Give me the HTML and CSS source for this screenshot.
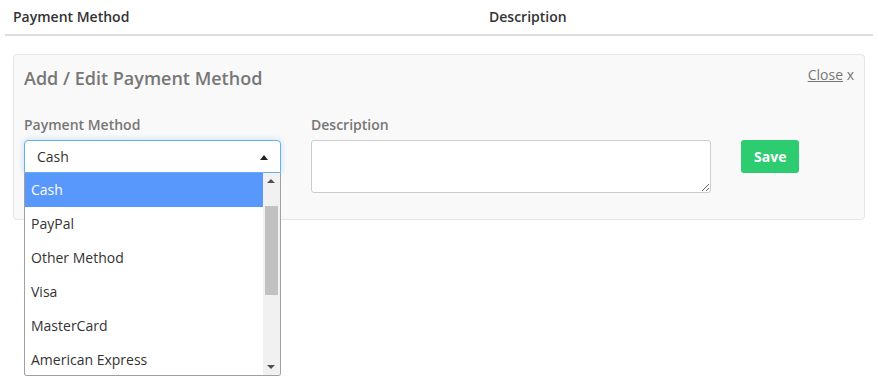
FILE: index.html
```html
<!DOCTYPE html>
<html lang="en">
<head>
  <meta charset="UTF-8">
  <title>Payment Methods</title>
  <link rel="stylesheet" href="styles.css">
</head>
<body>

  <div class="table-head">
    <div class="col">Payment Method</div>
    <div class="col">Description</div>
  </div>

  <div class="panel">
    <div class="panel-top">
      <h2>Add / Edit Payment Method</h2>
      <span class="close"><a href="#">Close</a> x</span>
    </div>

    <div class="form-row">
      <div class="field method">
        <label>Payment Method</label>
        <div class="select open">
          <span>Cash</span>
          <i class="arrow-up"></i>
          <div class="dropdown">
            <ul>
              <li class="active">Cash</li>
              <li>PayPal</li>
              <li>Other Method</li>
              <li>Visa</li>
              <li>MasterCard</li>
              <li>American Express</li>
            </ul>
            <div class="scrollbar">
              <i class="sb-up"></i>
              <div class="thumb"></div>
              <i class="sb-down"></i>
            </div>
          </div>
        </div>
      </div>

      <div class="field desc">
        <label>Description</label>
        <textarea></textarea>
      </div>

      <button class="save">Save</button>
    </div>
  </div>

</body>
</html>
```

FILE: styles.css
```css
html, body {
  min-height: 100vh;
}
body {
  margin: 0 5px;
  font-family: 'Open Sans', sans-serif;
  font-size: 14px;
  color: #333;
  background: #fff;
}
.table-head {
  display: grid;
  grid-template-columns: 476px 1fr;
  padding: 7px 8px 0;
  height: 27px;
  border-bottom: 2px solid #ddd;
  font-weight: 600;
}
.panel {
  margin: 18px 8px 0;
  background: #f9f9f9;
  border: 1px solid #e6e6e6;
  border-radius: 4px;
  padding: 10px 10px 26px;
}
.panel-top {
  display: flex;
  justify-content: space-between;
  align-items: center;
  height: 26px;
}
.panel-top h2 {
  margin: 0;
  font-size: 18px;
  font-weight: 600;
  color: #777;
}
.close {
  color: #777;
  font-size: 14px;
  margin-top: -8px;
}
.close a {
  color: #777;
}
.form-row {
  display: flex;
  align-items: flex-start;
  margin-top: 25px;
}
.field label {
  display: block;
  font-weight: 600;
  color: #777;
  height: 24px;
  line-height: 17px;
}
.method {
  width: 257px;
  margin-right: 30px;
}
.desc {
  width: 400px;
  margin-right: 30px;
}
.select {
  position: relative;
  height: 33px;
  box-sizing: border-box;
  border: 1px solid #66afe9;
  border-radius: 4px 4px 0 0;
  background: #fff;
  padding: 0 12px;
  line-height: 31px;
  box-shadow: 0 0 6px rgba(102, 175, 233, 0.35);
}
.arrow-up {
  position: absolute;
  right: 12px;
  top: 14px;
  border-left: 4px solid transparent;
  border-right: 4px solid transparent;
  border-bottom: 5px solid #222;
}
.dropdown {
  position: absolute;
  left: -1px;
  right: -1px;
  top: 32px;
  height: 203px;
  box-sizing: border-box;
  border: 1px solid #a0a0a0;
  border-top: none;
  border-radius: 0 0 3px 3px;
  background: #fff;
  overflow: hidden;
  display: flex;
  line-height: normal;
}
.dropdown ul {
  list-style: none;
  margin: 0;
  padding: 0;
  flex: 1;
}
.dropdown li {
  height: 34px;
  line-height: 33px;
  padding-left: 6px;
  color: #333;
}
.dropdown li.active {
  background: #5897fb;
  color: #fff;
}
.scrollbar {
  width: 17px;
  background: #f1f1f1;
  position: relative;
}
.thumb {
  position: absolute;
  left: 2px;
  right: 2px;
  top: 33px;
  height: 89px;
  background: #c1c1c1;
}
.sb-up, .sb-down {
  position: absolute;
  left: 4px;
  border-left: 4px solid transparent;
  border-right: 4px solid transparent;
}
.sb-up {
  top: 6px;
  border-bottom: 4px solid #505050;
}
.sb-down {
  bottom: 6px;
  border-top: 4px solid #505050;
}
textarea {
  display: block;
  width: 400px;
  height: 53px;
  box-sizing: border-box;
  border: 1px solid #ccc;
  border-radius: 3px;
  background: #fff;
  resize: vertical;
}
.save {
  margin-top: 24px;
  height: 33px;
  padding: 0 13px;
  background: #2ecc71;
  color: #fff;
  font-family: 'Open Sans', sans-serif;
  font-size: 14px;
  font-weight: 700;
  border: none;
  border-radius: 3px;
}
```
